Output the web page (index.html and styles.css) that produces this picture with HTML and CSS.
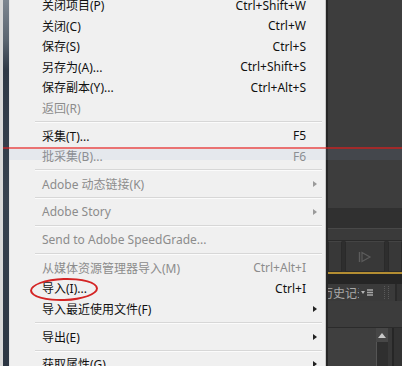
FILE: index.html
```html
<!doctype html>
<html>
    <head>
        <meta charset=utf-8>
        <title>文件菜单</title>
        <link rel="stylesheet" href="styles.css">
    </head>
    <body>
        <div class="screen">
            <div class="edge"></div>

            <div class="menu">
                <div class="item"><span>关闭项目(P)</span><span class="key">Ctrl+Shift+W</span><span></span></div>
                <div class="item"><span>关闭(C)</span><span class="key">Ctrl+W</span><span></span></div>
                <div class="item"><span>保存(S)</span><span class="key">Ctrl+S</span><span></span></div>
                <div class="item"><span>另存为(A)...</span><span class="key">Ctrl+Shift+S</span><span></span></div>
                <div class="item"><span>保存副本(Y)...</span><span class="key">Ctrl+Alt+S</span><span></span></div>
                <div class="item off"><span>返回(R)</span><span class="key"></span><span></span></div>
                <div class="sep"></div>
                <div class="item"><span>采集(T)...</span><span class="key">F5</span><span></span></div>
                <div class="item off"><span>批采集(B)...</span><span class="key">F6</span><span></span></div>
                <div class="sep"></div>
                <div class="item off"><span>Adobe 动态链接(K)</span><span class="key"></span><span class="sub"></span></div>
                <div class="sep"></div>
                <div class="item off"><span>Adobe Story</span><span class="key"></span><span class="sub"></span></div>
                <div class="sep"></div>
                <div class="item off"><span>Send to Adobe SpeedGrade...</span><span class="key"></span><span></span></div>
                <div class="sep"></div>
                <div class="item off"><span>从媒体资源管理器导入(M)</span><span class="key">Ctrl+Alt+I</span><span></span></div>
                <div class="item"><span>导入(I)...</span><span class="key">Ctrl+I</span><span></span></div>
                <div class="item"><span>导入最近使用文件(F)</span><span class="key"></span><span class="sub"></span></div>
                <div class="sep"></div>
                <div class="item"><span>导出(E)</span><span class="key"></span><span class="sub"></span></div>
                <div class="sep"></div>
                <div class="item"><span>获取属性(G)</span><span class="key"></span><span class="sub"></span></div>
            </div>

            <div class="side">
                <div class="side-top"></div>
                <div class="side-band"></div>
                <div class="side-strip"></div>
                <div class="side-tools">
                    <div class="tool tool-a"></div>
                    <div class="tool tool-b">
                        <svg width="14" height="12" viewBox="0 0 14 12">
                            <path d="M1.5 1v10" stroke="#5c5c5c" stroke-width="1.4"/>
                            <path d="M4 1.5l8 4.5-8 4.5z" fill="none" stroke="#5c5c5c" stroke-width="1.2"/>
                        </svg>
                    </div>
                    <div class="tool tool-c"></div>
                </div>
                <div class="side-accent"></div>
                <div class="side-gap"></div>
                <div class="side-tabs">
                    <span class="tab-name">历史记录</span>
                    <span class="tab-menu">
                        <svg width="12" height="8" viewBox="0 0 12 8">
                            <path d="M0 2h4l-2 3z" fill="#b4b4b4"/>
                            <path d="M6 1h6M6 3.5h6M6 6h6" stroke="#a8a8a8" stroke-width="1.4"/>
                        </svg>
                    </span>
                    <span class="tab-grip"></span>
                    <span class="tab-next"></span>
                </div>
                <div class="side-body">
                    <div class="body-head"></div>
                    <div class="body-main">
                        <div class="body-list"></div>
                        <div class="scroll">
                            <div class="scroll-up">
                                <svg width="8" height="5" viewBox="0 0 8 5"><path d="M0 5L4 0l4 5z" fill="#c8c8c8"/></svg>
                            </div>
                            <div class="scroll-track"></div>
                        </div>
                        <div class="body-edge"></div>
                    </div>
                </div>
            </div>

            <div class="red-line"></div>
            <div class="red-glow"></div>
            <div class="red-ring"></div>
        </div>
    </body>
</html>
```

FILE: styles.css
```css
body {
    margin: 0;
    background: #3d3d3d;
    overflow: hidden;
}

.screen {
    position: relative;
    display: flex;
    width: 402px;
    height: 366px;
    overflow: hidden;
    font-family: "Noto Sans", "Noto Sans CJK SC", sans-serif;
    font-size: 12px;
}

/* window frame on the left */
.edge {
    width: 6px;
    flex: none;
    border-left: 3px solid #d9d9d9;
    background: linear-gradient(#7d8690 0, #5b6570 40px, #2f3946 70px, #37424f 200px, #2c3643 366px);
}

.menu {
    width: 315px;
    flex: none;
    margin-top: -5px;
    background: #f0f0f0;
    border-left: 1px solid #e6e6e6;
    border-right: 1px solid #c9c9c9;
    color: #111;
}

.item {
    display: grid;
    grid-template-columns: 1fr auto 19px;
    align-items: center;
    height: 20.5px;
    padding-left: 32px;
    white-space: nowrap;
}

.item.off {
    color: #8c8c8c;
}

.key {
    text-align: right;
}

.sub {
    justify-self: end;
    margin-right: 8px;
    width: 0;
    height: 0;
    border-left: 4px solid #222;
    border-top: 3.5px solid transparent;
    border-bottom: 3.5px solid transparent;
}

.off .sub {
    border-left-color: #9a9a9a;
}

.sep {
    height: 7.4px;
    margin: 0 3px 0 25px;
    display: flex;
    align-items: center;
}

.sep::before {
    content: "";
    flex: 1;
    border-top: 1px solid #d7d7d7;
    border-bottom: 1px solid #fbfbfb;
}

/* dark application behind the menu */
.side {
    flex: 1;
    display: flex;
    flex-direction: column;
    border-left: 2px solid #262626;
    background: #3d3d3d;
}

.side-top {
    height: 208px;
    flex: none;
}

.side-band {
    height: 20px;
    flex: none;
    background: #303030;
    border-bottom: 1px solid #484848;
}

.side-strip {
    height: 11px;
    flex: none;
    background: #3a3a3a;
    border-bottom: 1px solid #2a2a2a;
}

.side-tools {
    height: 31px;
    flex: none;
    display: flex;
    gap: 3px;
    background: #2e2e2e;
}

.tool {
    background: #383838;
    border: 1px solid #2a2a2a;
    border-top-color: #444;
}

.tool-a {
    width: 12px;
}

.tool-b {
    width: 38px;
    display: flex;
    align-items: center;
    justify-content: center;
}

.tool-c {
    flex: 1;
}

.side-accent {
    height: 2px;
    flex: none;
    background: #b38d32;
}

.side-gap {
    height: 10px;
    flex: none;
    background: #252525;
}

.side-tabs {
    height: 17px;
    flex: none;
    display: flex;
    align-items: center;
    background: #3a3a3a;
    color: #a9a9a9;
    font-family: "Noto Sans CJK SC", sans-serif;
    font-size: 12px;
    overflow: hidden;
}

.tab-name {
    margin-left: -7px;
    width: 38px;
    flex: none;
    white-space: nowrap;
    overflow: hidden;
}

.tab-menu {
    display: flex;
    margin-left: 2px;
    width: 20px;
}

.tab-grip {
    width: 3px;
    height: 13px;
    margin-left: 3px;
    border-left: 1px dotted #5a5a5a;
    border-right: 1px dotted #5a5a5a;
}

.tab-next {
    margin-left: 6px;
    flex: 1;
    align-self: stretch;
    border-left: 2px solid #2a2a2a;
    background: #343434;
}

.side-body {
    flex: 1;
    display: flex;
    flex-direction: column;
    background: #3c3c3c;
}

.body-head {
    height: 26px;
    border-bottom: 1px solid #2b2b2b;
}

.body-main {
    flex: 1;
    display: flex;
}

.body-list {
    width: 48px;
    background: #3f3f3f;
}

.scroll {
    width: 12px;
    display: flex;
    flex-direction: column;
    background: #2f2f2f;
}

.scroll-up {
    height: 14px;
    display: flex;
    align-items: center;
    justify-content: center;
    background: #474747;
}

.scroll-track {
    flex: 1;
    border-left: 1px solid #555;
}

.body-edge {
    flex: 1;
    border-left: 4px solid #383838;
    box-shadow: inset 2px 0 0 #262626;
    background: #333;
}

/* hand-drawn marks over the screenshot */
.red-line {
    position: absolute;
    left: 3px;
    right: 0;
    top: 147px;
    height: 2px;
    background: rgba(230, 30, 30, 0.6);
}

.red-glow {
    position: absolute;
    left: 9px;
    right: 0;
    top: 149px;
    height: 11px;
    background: rgba(140, 170, 220, 0.1);
}

.red-ring {
    position: absolute;
    left: 30px;
    top: 278px;
    width: 64px;
    height: 19px;
    border: 2px solid #d42424;
    border-radius: 50%;
    transform: rotate(-2deg);
}
```
